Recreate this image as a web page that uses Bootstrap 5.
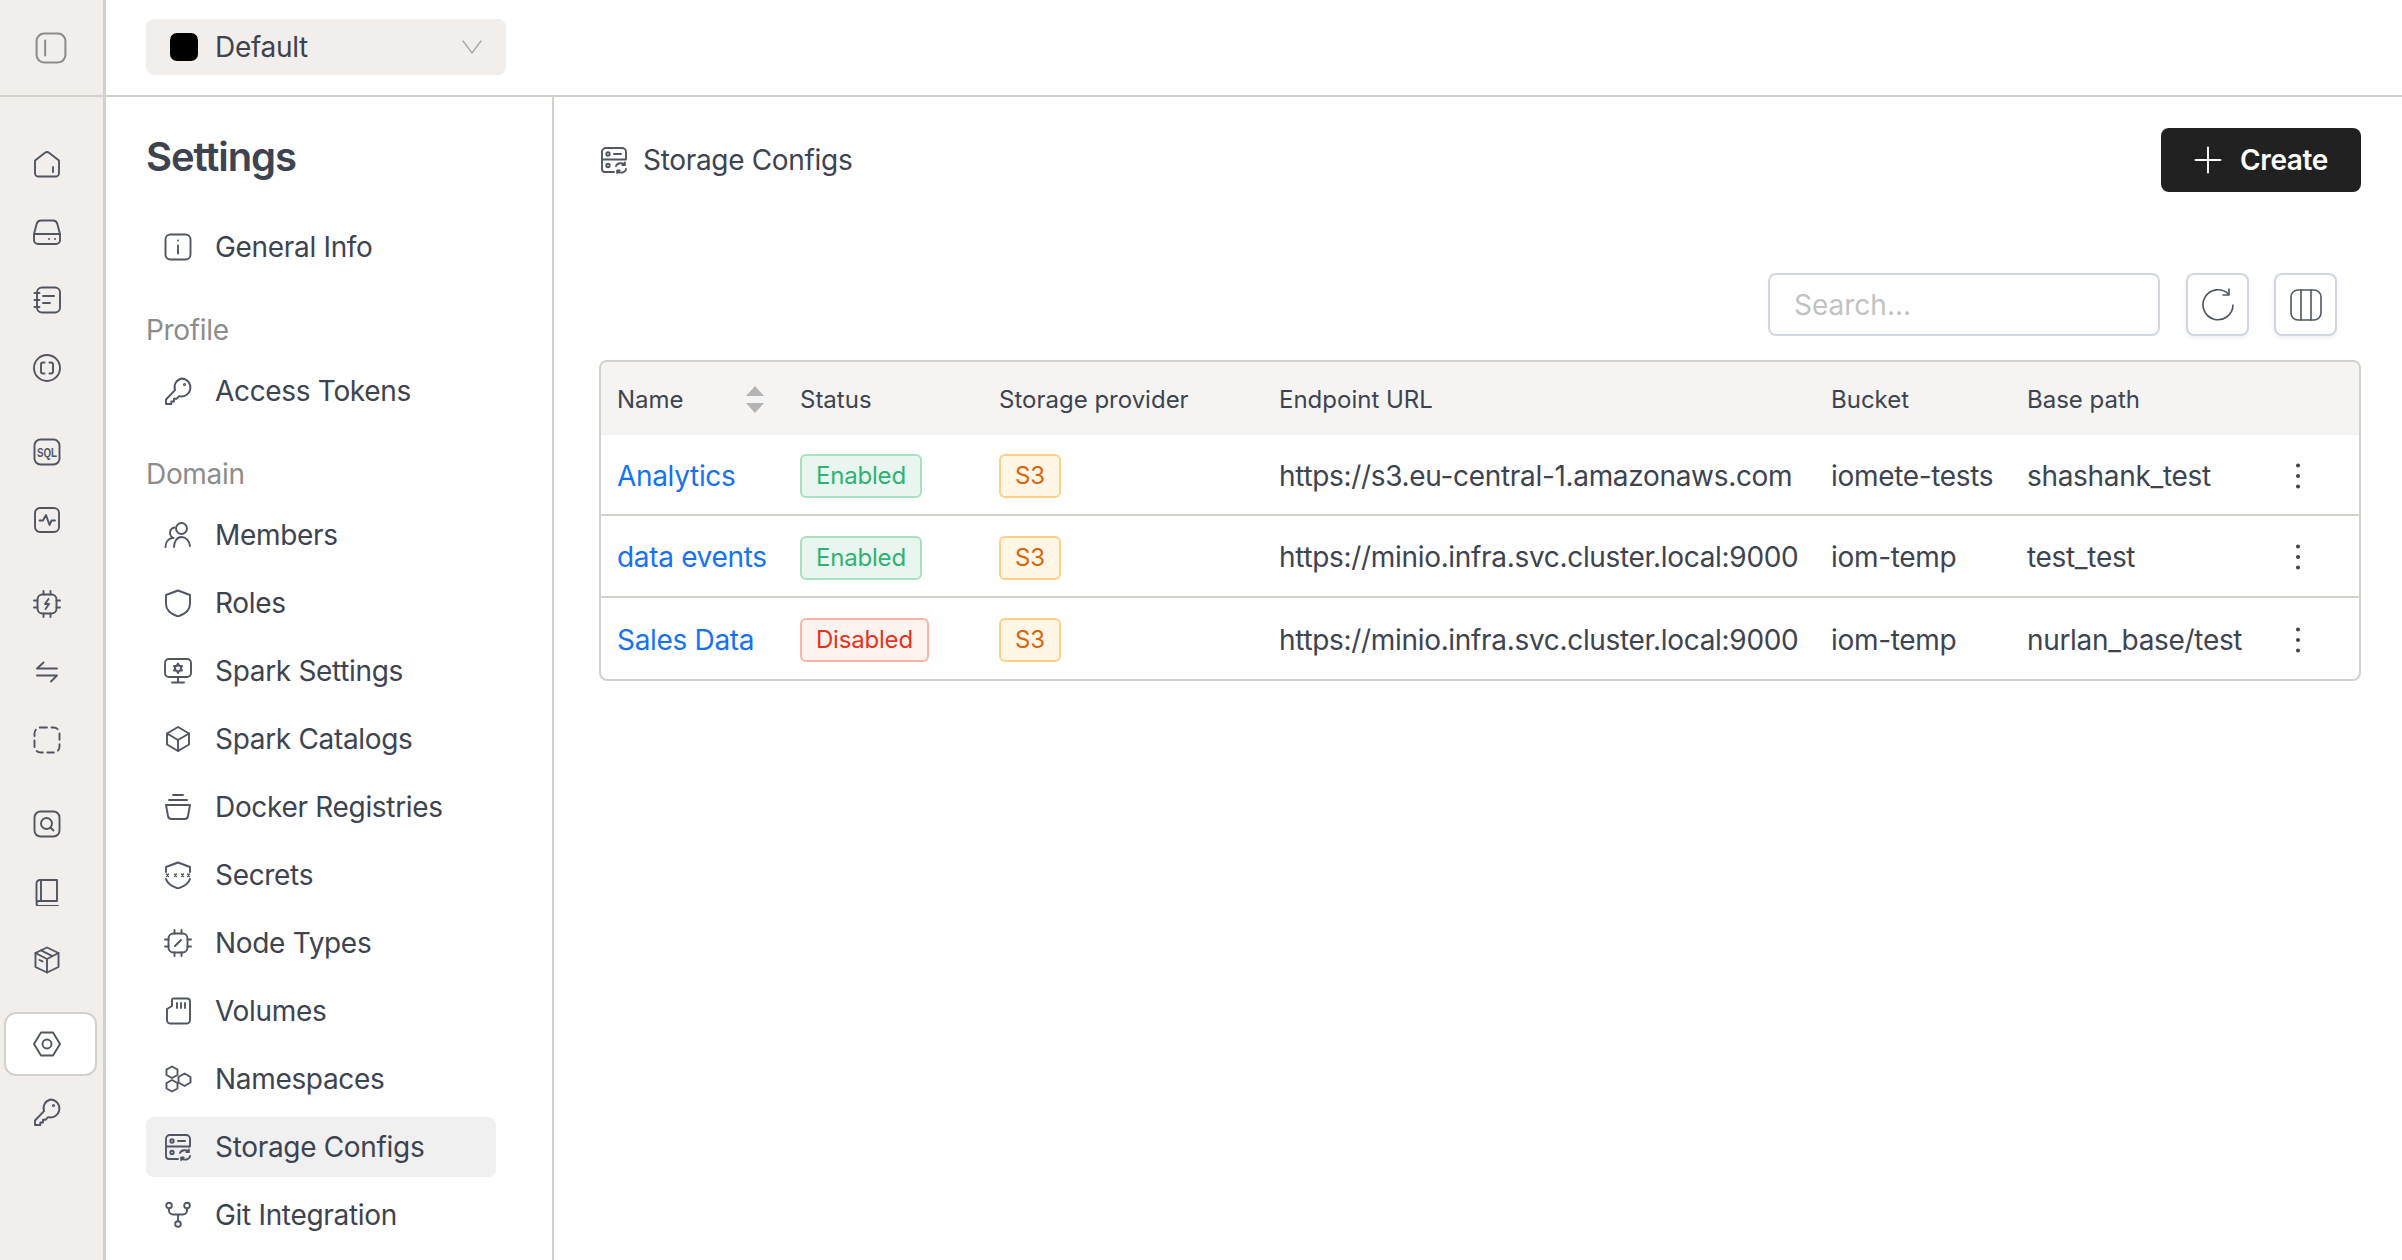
<!DOCTYPE html>
<html lang="en">
  <head>
    <meta charset="UTF-8" />
    <meta name="viewport" content="width=device-width, initial-scale=1.0" />
    <title>Storage Configs</title>
    <link href="https://cdn.jsdelivr.net/npm/bootstrap@5.3.3/dist/css/bootstrap.min.css" rel="stylesheet" />
    <style>
      body {
        font-family: "Inter", "Liberation Sans", sans-serif;
        font-size: 28px;
        letter-spacing: -.32px;
        color: #3d4350;
        background: #fff;
      }
      svg.ico {
        width: 28px;
        height: 28px;
        flex: none;
        fill: none;
        stroke: #4f5562;
        stroke-width: 1.9;
        stroke-linecap: round;
        stroke-linejoin: round;
      }
      svg.ico text {
        fill: #4f5562;
        stroke: none;
        font-family: "Liberation Sans", sans-serif;
        font-weight: 700;
        font-size: 12px;
        letter-spacing: 0;
      }
      .top-strip { height: 97px; border-bottom: 2px solid #d2d2cd; }
      .rail-head {
        width: 106px;
        background: #f2eeeb;
        border-right: 3px solid #d2d2cd;
        padding-left: 35px;
      }
      svg.ico.rail-toggle { width: 32px; height: 32px; stroke: #8b8b8b; }
      .domain-pick {
        width: 360px;
        height: 56px;
        margin: 0 0 1px 40px;
        padding: 0 24px;
        background: #f2eeeb;
        border-radius: 8px;
        gap: 17px;
      }
      svg.ico.pick-arrow { width: 20px; height: 14px; stroke: #ababab; stroke-width: 1.5; }
      .domain-dot { width: 28px; height: 28px; background: #000; border-radius: 7px; }
      .rail {
        width: 106px;
        background: #f2eeeb;
        border-right: 3px solid #d2d2cd;
        padding: 35px 6px 0 4px;
        gap: 20px;
      }
      .rail-group { gap: 4px; }
      .rail-btn {
        height: 64px;
        padding-left: 27px;
        border: 2px solid transparent;
        border-radius: 12px;
      }
      .rail-btn.on { background: #fff; border-color: #d2d2cd; }
      .side {
        width: 448px;
        border-right: 2px solid #d2d2cd;
        padding: 36px 0 0 40px;
      }
      .side-title { font-size: 40px; line-height: 48px; font-weight: 600; letter-spacing: -1.1px; margin: 0 0 36px; color: #3d4350; }
      .side-label { font-size: 28px; line-height: 40px; color: #8c8c8c; margin: 33px 0 11px; }
      .side-list { width: 350px; gap: 8px; }
      .side-link {
        height: 60px;
        padding: 0 0 0 18px;
        gap: 23px;
        color: #3d4350;
        border-radius: 8px;
      }
      .side-link:hover, .side-link:focus { color: #3d4350; }
      .side-link.on { background: #f0f0f0; }
      .main-pane { padding: 31px 41px 0 45px; }
      .pane-head { height: 64px; }
      .pane-title { gap: 15px; padding-left: 1px; }
      .btn-create {
        width: 200px;
        height: 64px;
        padding: 0;
        gap: 18px;
        background: #212121;
        border: 0;
        border-radius: 8px;
        color: #fff;
        font-size: 28px;
        font-weight: 600;
        letter-spacing: -.4px;
      }
      svg.ico.plus-mark { stroke: #fff; }
      .tools { margin-top: 81px; margin-bottom: 24px; padding-right: 24px; gap: 25px; }
      .tool-search {
        width: 392px;
        height: 63px;
        margin-right: 1px;
        font-size: 28px;
        padding: 0 24px;
        color: #3d4350;
        border: 2px solid #d0d6e2;
        border-radius: 8px;
      }
      .tool-search::placeholder { color: #c2c2c2; }
      .tool-btn {
        width: 63px;
        height: 63px;
        padding: 0;
        background: #fff;
        border: 2px solid #d0d6e2;
        border-radius: 8px;
        box-shadow: 0 2px 4px rgba(208, 214, 226, .4);
      }
      .tool-btn svg.ico { width: 34px; height: 34px; stroke-width: 1.6; }
      .grid-wrap { border: 2px solid #d2d2cd; border-radius: 8px; overflow: hidden; }
      .cfg-table { table-layout: fixed; width: 100%; margin: 0; font-size: 28px; color: #3d4350; }
      .cfg-table > :not(caption) > * > * { padding: 2px 0 0 16px; box-shadow: none; vertical-align: middle; white-space: nowrap; border-bottom: 0; }
      .cfg-table thead th {
        height: 73px;
        background: #f5f4f2;
        font-size: 24px;
        font-weight: 400;
        letter-spacing: 0;
        color: #3d4350;
      }
      .cfg-table tbody td { height: 82px; border-top: 2px solid #d2d2cd; color: #3d4350; }
      .cfg-table tbody tr:first-child td { height: 80px; border-top: 0; }
      .w-name { width: 183px; }
      .w-status { width: 199px; }
      .w-prov { width: 280px; }
      .w-end { width: 552px; }
      .w-buck { width: 196px; }
      .w-base { width: 240px; }
      .cfg-link { color: #1672f3; text-decoration: none; }
      .sort-mark { width: 18px; height: 27px; margin-right: 20px; fill: #b3b3b3; }
      .tag {
        display: inline-flex;
        align-items: center;
        height: 44px;
        margin-top: -2px;
        padding: 0 14px;
        font-size: 24px;
        letter-spacing: -.2px;
        border: 2px solid;
        border-radius: 6px;
      }
      .tag-on { background: #e9f6ef; border-color: #a8e0c2; color: #2fb274; }
      .tag-off { background: #fff3ef; border-color: #ffb3a3; color: #e5341e; }
      .tag-s3 { background: #fff6e6; border-color: #ffd084; color: #d8660f; }
      .more-dots { width: 6px; height: 28px; margin-left: 28px; fill: #3d4350; display: block; }
    </style>
  </head>
  <body class="vh-100 overflow-hidden d-flex flex-column">
    <svg class="d-none">
      <symbol id="i-key" viewBox="0 0 28 28"><path d="M17.5 1.500a9 9 0 1 1-2.400 17.700l-2.600 2.600H10v2.700H7.300V27H2v-4.500l9-9.300A9 9 0 0 1 17.500 1.500z"/><circle cx="20.500" cy="7.500" r=".6"/></symbol>
      <symbol id="i-box" viewBox="0 0 28 28"><path d="M14 1.500 25.500 7v14L14 26.500 2.500 21V7z"/><path d="M2.500 7 14 13l11.500-6M14 13v13.500M8 4.300l11.500 5.800M6.500 14l3 1.400"/></symbol>
      <symbol id="i-store" viewBox="0 0 28 28"><path d="M26 13V6a4 4 0 0 0-4-4H6a4 4 0 0 0-4 4v17a3 3 0 0 0 3 3h9M2 13.500h24"/><circle cx="8" cy="8" r="1.700"/><circle cx="8" cy="19.500" r="1.700"/><path d="M14 8h7M16 20a5 4 0 0 1 9-1M26 23a5 4 0 0 1-9 2M24.800 16.500V19h-2.500M17.200 27v-2.500h2.500"/></symbol>
    </svg>

    <div class="top-strip d-flex flex-shrink-0">
      <div class="rail-head d-flex align-items-center">
        <svg class="ico rail-toggle" viewBox="0 0 30 30"><rect x="1.500" y="1.500" width="27" height="27" rx="7"/><path d="M9.500 8v14"/></svg>
      </div>
      <div class="d-flex align-items-center">
        <div class="domain-pick d-flex align-items-center">
          <span class="domain-dot"></span>
          <span class="flex-grow-1">Default</span>
          <svg class="ico pick-arrow" viewBox="0 0 20 14"><path d="M1 1l9 12 9-12"/></svg>
        </div>
      </div>
    </div>

    <div class="d-flex flex-grow-1 overflow-hidden">
      <nav class="rail d-flex flex-column flex-shrink-0">
        <div class="rail-group d-flex flex-column">
          <a class="rail-btn d-flex align-items-center"><svg class="ico" viewBox="0 0 28 28"><path d="M2 10.500 12 2.800a3.300 3.300 0 0 1 4 0l10 7.700V23a3.500 3.500 0 0 1-3.500 3.500h-17A3.500 3.500 0 0 1 2 23z"/><path d="M20 17v5"/></svg></a>
          <a class="rail-btn d-flex align-items-center"><svg class="ico" viewBox="0 0 28 28"><path d="M8 2.500h12a4.500 4.500 0 0 1 4.300 3.300L27 16v6a4 4 0 0 1-4 4H5a4 4 0 0 1-4-4v-6L3.700 5.800A4.500 4.500 0 0 1 8 2.500z"/><path d="M1.300 16h25.400M16 21h.1M22 21h.1"/></svg></a>
          <a class="rail-btn d-flex align-items-center"><svg class="ico" viewBox="0 0 28 28"><rect x="4" y="1.500" width="23" height="25" rx="5"/><path d="M1.500 7h5M1.500 14h5M1.500 21h5M10 10h11M10 17h7"/></svg></a>
          <a class="rail-btn d-flex align-items-center"><svg class="ico" viewBox="0 0 28 28"><circle cx="14" cy="14" r="13"/><path d="M11.500 8.500H10a2 2 0 0 0-2 2v7a2 2 0 0 0 2 2h1.500M16.500 8.500H18a2 2 0 0 1 2 2v7a2 2 0 0 1-2 2h-1.500"/></svg></a>
        </div>
        <div class="rail-group d-flex flex-column">
          <a class="rail-btn d-flex align-items-center"><svg class="ico" viewBox="0 0 28 28"><rect x="1.500" y="1.500" width="25" height="25" rx="6"/><text x="14" y="18.500" text-anchor="middle" textLength="20" lengthAdjust="spacingAndGlyphs">SQL</text></svg></a>
          <a class="rail-btn d-flex align-items-center"><svg class="ico" viewBox="0 0 28 28"><rect x="2" y="2" width="24" height="24" rx="5"/><path d="M6.500 14.500H10l3-5.500 3.500 10 2-4.500h3.500"/></svg></a>
        </div>
        <div class="rail-group d-flex flex-column">
          <a class="rail-btn d-flex align-items-center"><svg class="ico" viewBox="0 0 28 28"><rect x="4.500" y="4.500" width="19" height="19" rx="5"/><path d="M10.500 1v3.500M17.500 1v3.500M10.500 23.500V27M17.500 23.500V27M1 10.500h3.500M1 17.500h3.500M23.500 10.500H27M23.500 17.500H27M15.500 9l-3.500 5h4l-3.500 5"/></svg></a>
          <a class="rail-btn d-flex align-items-center"><svg class="ico" viewBox="0 0 28 28"><path d="M24 10.500H4l6.500-6M4 17.500h20l-6 6"/></svg></a>
          <a class="rail-btn d-flex align-items-center"><svg class="ico" viewBox="0 0 28 28"><rect x="1.500" y="1.500" width="25" height="25" rx="6" stroke-dasharray="6.500 4.500"/></svg></a>
        </div>
        <div class="rail-group d-flex flex-column">
          <a class="rail-btn d-flex align-items-center"><svg class="ico" viewBox="0 0 28 28"><rect x="1.500" y="1.500" width="25" height="25" rx="6"/><circle cx="13.500" cy="13.500" r="5.500"/><path d="M17.500 17.500l3 3"/></svg></a>
          <a class="rail-btn d-flex align-items-center"><svg class="ico" viewBox="0 0 28 28"><path d="M3.500 23V5.500A3.500 3.500 0 0 1 7 2h17v21H6a2.500 2.500 0 0 0 0 5h19M8 2v21"/></svg></a>
          <a class="rail-btn d-flex align-items-center"><svg class="ico"><use href="#i-box"/></svg></a>
        </div>
        <div class="rail-group d-flex flex-column">
          <a class="rail-btn on d-flex align-items-center"><svg class="ico" viewBox="0 0 28 28"><path d="M8 2.500h12L27 14l-7 11.500H8L1 14z"/><circle cx="14" cy="14" r="4.500"/></svg></a>
          <a class="rail-btn d-flex align-items-center"><svg class="ico"><use href="#i-key"/></svg></a>
        </div>
      </nav>

      <aside class="side flex-shrink-0">
        <h1 class="side-title">Settings</h1>
        <div class="nav flex-column side-list">
          <a class="nav-link side-link d-flex align-items-center"><svg class="ico" viewBox="0 0 28 28"><rect x="1.500" y="1.500" width="25" height="25" rx="5"/><path d="M14 12.500v8M14 7.500v.1"/></svg>General Info</a>
        </div>
        <div class="side-label">Profile</div>
        <div class="nav flex-column side-list">
          <a class="nav-link side-link d-flex align-items-center"><svg class="ico"><use href="#i-key"/></svg>Access Tokens</a>
        </div>
        <div class="side-label">Domain</div>
        <div class="nav flex-column side-list">
          <a class="nav-link side-link d-flex align-items-center"><svg class="ico" viewBox="0 0 28 28"><circle cx="17.500" cy="7.500" r="5.500"/><path d="M10.500 6.500a5.500 5.500 0 0 0-1 10.500M1.500 26c0-5 3-8.500 7-9M10 26c0-5.500 3-10 7.500-10s8 4 8.500 9"/></svg>Members</a>
          <a class="nav-link side-link d-flex align-items-center"><svg class="ico" viewBox="0 0 28 28"><path d="M14 1.500 26 6v9c0 6-5 10-12 12.500C7 25 2 21 2 15V6z"/></svg>Roles</a>
          <a class="nav-link side-link d-flex align-items-center"><svg class="ico" viewBox="0 0 28 28"><rect x="1" y="2" width="26" height="18" rx="4"/><path d="M14 20v5M8 25.500h12M14 6.500l1.300 2.500h2.700l-1.300 2.300 1.300 2.200h-2.700L14 16l-1.300-2.500H10l1.300-2.200L10 9h2.700z"/></svg>Spark Settings</a>
          <a class="nav-link side-link d-flex align-items-center"><svg class="ico" viewBox="0 0 28 28"><path d="M14 2 25 8.500v11L14 26 3 19.500v-11z"/><path d="M3 8.500 14 15l11-6.500M14 15v11"/></svg>Spark Catalogs</a>
          <a class="nav-link side-link d-flex align-items-center"><svg class="ico" viewBox="0 0 28 28"><path d="M9 2h10M5 7h18M2 12h24l-2 11a3.500 3.500 0 0 1-3.500 3h-13A3.500 3.500 0 0 1 4 23z"/></svg>Docker Registries</a>
          <a class="nav-link side-link d-flex align-items-center"><svg class="ico" viewBox="0 0 28 28"><path d="M2 11V6L14 1.500 26 6v5M2 18c1 4 5 7 12 9.500 7-2.500 11-5.500 12-9.500"/><path d="M2.500 13l2 2.500M4.500 13l-2 2.500M10.500 13l2 2.500M12.500 13l-2 2.500M17.500 13l2 2.500M19.500 13l-2 2.500M23.500 13l2 2.500M25.500 13l-2 2.500" stroke-width="1.300"/></svg>Secrets</a>
          <a class="nav-link side-link d-flex align-items-center"><svg class="ico" viewBox="0 0 28 28"><rect x="4.500" y="4.500" width="19" height="19" rx="5"/><path d="M10.500 1v3.500M17.500 1v3.500M10.500 23.500V27M17.500 23.500V27M1 10.500h3.500M1 17.500h3.500M23.500 10.500H27M23.500 17.500H27M17 11l-6 6"/></svg>Node Types</a>
          <a class="nav-link side-link d-flex align-items-center"><svg class="ico" viewBox="0 0 28 28"><path d="M10 1.500h13a3 3 0 0 1 3 3V23a3.500 3.500 0 0 1-3.500 3.500h-16A3.500 3.500 0 0 1 3 23V12l5-3V3a1.500 1.500 0 0 1 2-1.500zM13 6v5M17 6v5M21 6v5"/></svg>Volumes</a>
          <a class="nav-link side-link d-flex align-items-center"><svg class="ico" viewBox="0 0 28 28"><path d="M8 1.500l5.500 3v5.500L8 13l-5.500-3V4.500zM8 15l5.500 3v5.500L8 26.500l-5.500-3V18zM20.500 8.500l6 3.500v5.500l-6 3.500-6-3.500V12z"/></svg>Namespaces</a>
          <a class="nav-link side-link on d-flex align-items-center"><svg class="ico"><use href="#i-store"/></svg>Storage Configs</a>
          <a class="nav-link side-link d-flex align-items-center"><svg class="ico" viewBox="0 0 28 28"><circle cx="5" cy="4.500" r="2.800"/><circle cx="23" cy="4.500" r="2.800"/><circle cx="14" cy="23" r="2.800"/><path d="M5 7.500v2a4 4 0 0 0 4 4h10a4 4 0 0 0 4-4v-2M14 13.500V20"/></svg>Git Integration</a>
        </div>
      </aside>

      <main class="main-pane flex-grow-1">
        <div class="pane-head d-flex align-items-center justify-content-between">
          <div class="pane-title d-flex align-items-center">
            <svg class="ico"><use href="#i-store"/></svg>
            <span>Storage Configs</span>
          </div>
          <button type="button" class="btn btn-create d-flex align-items-center justify-content-center">
            <svg class="ico plus-mark" viewBox="0 0 28 28"><path d="M14 1.500v25M1.500 14h25"/></svg>Create
          </button>
        </div>

        <div class="tools d-flex justify-content-end">
          <input type="text" class="form-control tool-search" placeholder="Search..." />
          <button type="button" class="btn tool-btn d-flex align-items-center justify-content-center">
            <svg class="ico" viewBox="0 0 34 34"><path d="M32 17A15 15 0 1 1 27.500 6M28 1v6h-6"/></svg>
          </button>
          <button type="button" class="btn tool-btn d-flex align-items-center justify-content-center">
            <svg class="ico" viewBox="0 0 34 34"><rect x="2" y="2" width="30" height="30" rx="7"/><path d="M12 2v30M22 2v30"/></svg>
          </button>
        </div>

        <div class="grid-wrap">
          <table class="table cfg-table">
            <colgroup>
              <col class="w-name" /><col class="w-status" /><col class="w-prov" /><col class="w-end" /><col class="w-buck" /><col class="w-base" /><col />
            </colgroup>
            <thead>
              <tr>
                <th>
                  <div class="d-flex align-items-center justify-content-between">
                    <span>Name</span>
                    <svg class="sort-mark" viewBox="0 0 18 27"><path d="M9 0l9 10H0zM0 17h18l-9 10z"/></svg>
                  </div>
                </th>
                <th>Status</th>
                <th>Storage provider</th>
                <th>Endpoint URL</th>
                <th>Bucket</th>
                <th>Base path</th>
                <th></th>
              </tr>
            </thead>
            <tbody>
              <tr>
                <td><a class="cfg-link" href="#">Analytics</a></td>
                <td><span class="tag tag-on">Enabled</span></td>
                <td><span class="tag tag-s3">S3</span></td>
                <td>https://s3.eu-central-1.amazonaws.com</td>
                <td>iomete-tests</td>
                <td>shashank_test</td>
                <td><svg class="more-dots" viewBox="0 0 6 28"><circle cx="3" cy="3.500" r="2"/><circle cx="3" cy="14" r="2"/><circle cx="3" cy="24.500" r="2"/></svg></td>
              </tr>
              <tr>
                <td><a class="cfg-link" href="#">data events</a></td>
                <td><span class="tag tag-on">Enabled</span></td>
                <td><span class="tag tag-s3">S3</span></td>
                <td>https://minio.infra.svc.cluster.local:9000</td>
                <td>iom-temp</td>
                <td>test_test</td>
                <td><svg class="more-dots" viewBox="0 0 6 28"><circle cx="3" cy="3.500" r="2"/><circle cx="3" cy="14" r="2"/><circle cx="3" cy="24.500" r="2"/></svg></td>
              </tr>
              <tr>
                <td><a class="cfg-link" href="#">Sales Data</a></td>
                <td><span class="tag tag-off">Disabled</span></td>
                <td><span class="tag tag-s3">S3</span></td>
                <td>https://minio.infra.svc.cluster.local:9000</td>
                <td>iom-temp</td>
                <td>nurlan_base/test</td>
                <td><svg class="more-dots" viewBox="0 0 6 28"><circle cx="3" cy="3.500" r="2"/><circle cx="3" cy="14" r="2"/><circle cx="3" cy="24.500" r="2"/></svg></td>
              </tr>
            </tbody>
          </table>
        </div>
      </main>
    </div>

    <script src="https://cdn.jsdelivr.net/npm/bootstrap@5.3.3/dist/js/bootstrap.bundle.min.js"></script>
  </body>
</html>
